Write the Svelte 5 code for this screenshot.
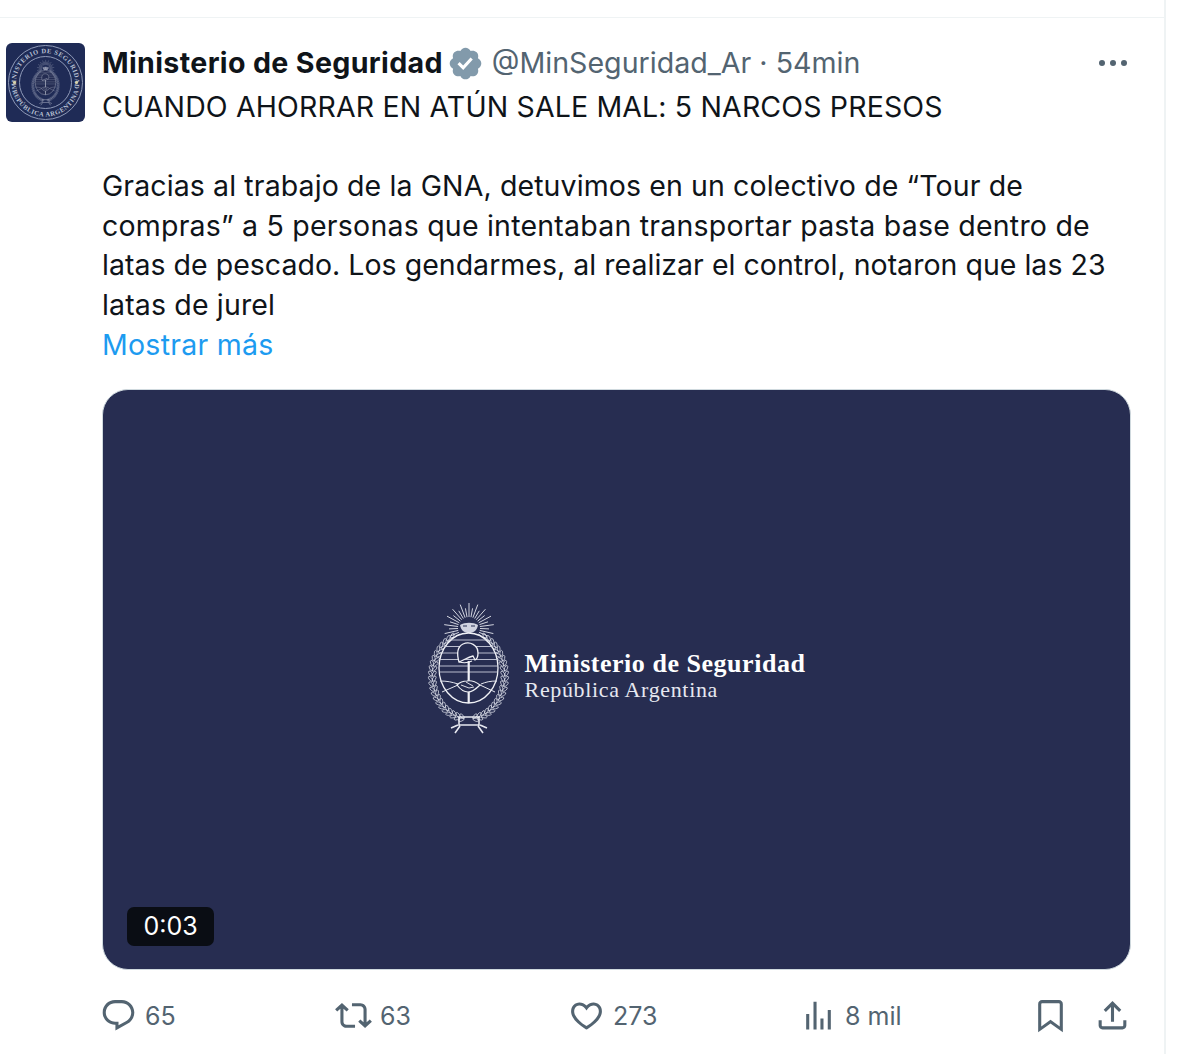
<script>
  const rays = Array.from({ length: 33 }, (_, i) => {
    const a = (Math.PI * (i - 16)) / 17.5;
    const long = i % 2 === 0;
    const r1 = 11;
    const r2 = long ? 25 : 20;
    return {
      x1: 49 + r1 * Math.sin(a),
      y1: 33 - r1 * Math.cos(a),
      x2: 49 + r2 * Math.sin(a),
      y2: 33 - r2 * Math.cos(a)
    };
  });

  const leaves = [];
  for (let side = -1; side <= 1; side += 2) {
    for (let i = 0; i < 22; i++) {
      const t = 0.14 * Math.PI + (i / 21) * 0.8 * Math.PI;
      const deg = side * ((t * 180) / Math.PI + 90);
      [34.5, 38].forEach((r, row) => {
        const cx = 48.5 + side * r * Math.sin(t);
        const cy = 81 - (r + 6.5) * Math.cos(t);
        leaves.push({ cx, cy, deg: deg + side * (row ? 35 : -35) });
      });
    }
  }
  const half = (y) => 29.5 * Math.sqrt(1 - ((y - 73) / 35) ** 2);
  const stripes = [45, 51.5, 58, 64.5, 71, 77].map((y) => ({ y, h: half(y) }));
</script>

<div class="page">
  <div class="topbar"></div>
  <article class="tweet">
    <div class="avatar">
      <svg viewBox="0 0 79 79" width="79" height="79" aria-hidden="true">
        <rect width="79" height="79" rx="6" fill="#1f2b56" />
        <circle cx="39.5" cy="39.5" r="37" fill="none" stroke="#8f9ab8" stroke-width="1" />
        <circle cx="39.5" cy="39.5" r="26" fill="none" stroke="#8f9ab8" stroke-width="1" />
        <defs>
          <path id="arcTop" d="M 39.5 69 A 29.5 29.5 0 1 1 39.5 10 A 29.5 29.5 0 1 1 39.5 69" />
          <path id="arcBottom" d="M 39.5 5.5 A 34 34 0 0 0 39.5 73.5 A 34 34 0 0 0 39.5 5.5" />
        </defs>
        <text class="seal"><textPath href="#arcTop" startOffset="50%" text-anchor="middle">MINISTERIO DE SEGURIDAD</textPath></text>
        <text class="seal"><textPath href="#arcBottom" startOffset="50%" text-anchor="middle">REPÚBLICA ARGENTINA</textPath></text>
        <circle cx="8.5" cy="39.5" r="1.6" fill="#d9d3a8" />
        <circle cx="70.5" cy="39.5" r="1.6" fill="#d9d3a8" />
        <use href="#crest" transform="translate(22.5 14) scale(0.35)" opacity="0.65" />
      </svg>
    </div>
    <div class="body">
      <header class="head">
        <strong class="name">Ministerio de Seguridad</strong>
        <svg class="badge" viewBox="0 0 24 24" aria-hidden="true"><path fill="#829aab" d="M22.25 12c0-1.43-.88-2.67-2.19-3.34.46-1.39.2-2.9-.81-3.91s-2.52-1.27-3.91-.81c-.66-1.31-1.91-2.19-3.34-2.19s-2.67.88-3.33 2.19c-1.4-.46-2.91-.2-3.92.81s-1.26 2.52-.8 3.91c-1.31.67-2.2 1.91-2.2 3.34s.89 2.67 2.2 3.34c-.46 1.39-.21 2.9.8 3.91s2.52 1.26 3.91.81c.67 1.31 1.91 2.19 3.34 2.19s2.68-.88 3.34-2.19c1.39.45 2.9.2 3.91-.81s1.27-2.52.81-3.91c1.31-.67 2.19-1.91 2.19-3.34zm-11.71 4.2L6.8 12.46l1.41-1.42 2.26 2.26 4.8-5.23 1.47 1.36-6.2 6.77z" /></svg>
        <span class="handle">@MinSeguridad_Ar · 54min</span>
        <svg class="more" viewBox="0 0 32 8" aria-hidden="true"><circle cx="5" cy="4" r="3" /><circle cx="16" cy="4" r="3" /><circle cx="27" cy="4" r="3" /></svg>
      </header>
      <div class="text">
        <p class="l-caps">CUANDO AHORRAR EN ATÚN SALE MAL: 5 NARCOS PRESOS</p>
        <p class="l-a">Gracias al trabajo de la GNA, detuvimos en un colectivo de “Tour de</p>
        <p class="l-b">compras” a 5 personas que intentaban transportar pasta base dentro de</p>
        <p>latas de pescado. Los gendarmes, al realizar el control, notaron que las 23</p>
        <p class="l-c">latas de jurel</p>
        <p class="link">Mostrar más</p>
      </div>

      <div class="media">
        <div class="logo">
          <svg class="crest" viewBox="0 0 100 145" width="100" height="145" aria-hidden="true">
            <g id="crest">
              <g stroke="#e6e8f0" stroke-width="1" fill="none" opacity="0.9">
                {#each rays as r}
                  <line x1={r.x1} y1={r.y1} x2={r.x2} y2={r.y2} />
                {/each}
              </g>
              <path d="M40 30c5-3 13-3 18 0-1 6-5 8-9 8s-8-2-9-8z" fill="#cfd2e0" />
              <path d="M43 31h4M51 31h4" stroke="#272d51" stroke-width="1.2" />
              <g fill="none" stroke="#dfe2ec" stroke-width="0.7">
                {#each leaves as l}
                  <ellipse cx={l.cx} cy={l.cy} rx="1.4" ry="3" transform="rotate({l.deg} {l.cx} {l.cy})" />
                {/each}
              </g>
              <ellipse cx="48.5" cy="73" rx="29.5" ry="35" fill="#272d51" stroke="#f0f1f6" stroke-width="1.3" />
              <g stroke="#c9cddd" stroke-width="0.9">
                {#each stripes as s}
                  <line x1={48.5 - s.h} y1={s.y} x2={48.5 + s.h} y2={s.y} />
                {/each}
              </g>
              <path d="M39 67c-2-7-2-15 4-18 7-3 15 1 15 9 0 3-1 6-3 7l-2-4c-5 1-9 4-14 6z" fill="#272d51" stroke="#f0f1f6" stroke-width="1.3" />
              <path d="M39 67c4 1 9 1 13-1" fill="none" stroke="#f0f1f6" stroke-width="1.1" />
              <rect x="47.6" y="66" width="2.2" height="42" fill="#f0f1f6" />
              <path d="M20 86c7 0 12 1 18 3M22 97l16-7M77 86c-7 0-11 1-16 3M75 97l-15-7" fill="none" stroke="#e6e8f0" stroke-width="1" />
              <path d="M37 90c3-3 7-4 10-4 5-1 9 1 13 4-4 4-8 7-12 7-4 0-8-3-11-7z" fill="#272d51" stroke="#f0f1f6" stroke-width="1.2" />
              <path d="M41 90l8 3 5-1M46 87l7 4" fill="none" stroke="#f0f1f6" stroke-width="0.9" />
              <path d="M39 122h20v8H39zM40 131l-5 7M58 131l5 7M38 130l-7 3M60 130l7 3" fill="none" stroke="#e6e8f0" stroke-width="1.6" />
            </g>
          </svg>
          <div class="wordmark">
            <div class="wm1">Ministerio de Seguridad</div>
            <div class="wm2">República Argentina</div>
          </div>
        </div>
        <span class="duration">0:03</span>
      </div>

      <footer class="actions">
        <div class="act">
          <svg viewBox="0 0 24 24" aria-hidden="true"><path d="M1.751 10c0-4.42 3.584-8 8.005-8h4.366c4.49 0 8.129 3.64 8.129 8.13 0 2.96-1.607 5.68-4.196 7.11l-8.054 4.46v-3.69h-.067c-4.49.1-8.183-3.51-8.183-8.01zm8.005-6c-3.317 0-6.005 2.69-6.005 6 0 3.37 2.77 6.08 6.138 6.01l.351-.01h1.761v2.3l5.087-2.81c1.951-1.08 3.163-3.13 3.163-5.36 0-3.39-2.744-6.13-6.129-6.13H9.756z" /></svg>
          <span>65</span>
        </div>
        <div class="act">
          <svg viewBox="0 0 24 24" aria-hidden="true"><path d="M4.5 3.88l4.432 4.14-1.364 1.46L5.5 7.55V16c0 1.1.896 2 2 2H13v2H7.5c-2.209 0-4-1.79-4-4V7.55L1.432 9.48.068 8.02 4.5 3.88zM16.5 6H11V4h5.5c2.209 0 4 1.79 4 4v8.45l2.068-1.93 1.364 1.46-4.432 4.14-4.432-4.14 1.364-1.46 2.068 1.93V8c0-1.1-.896-2-2-2z" /></svg>
          <span>63</span>
        </div>
        <div class="act">
          <svg viewBox="0 0 24 24" aria-hidden="true"><path d="M16.697 5.5c-1.222-.06-2.679.51-3.89 2.16l-.805 1.09-.806-1.09C9.984 6.01 8.526 5.44 7.304 5.5c-1.243.07-2.349.78-2.91 1.91-.552 1.12-.633 2.78.479 4.82 1.074 1.97 3.257 4.27 7.129 6.61 3.87-2.34 6.052-4.64 7.126-6.61 1.111-2.04 1.03-3.7.477-4.82-.561-1.13-1.666-1.84-2.908-1.91zm4.187 7.69c-1.351 2.48-4.001 5.12-8.379 7.67l-.503.3-.504-.3c-4.379-2.55-7.029-5.19-8.382-7.67-1.36-2.5-1.41-4.86-.514-6.67.887-1.79 2.647-2.91 4.601-3.01 1.651-.09 3.368.56 4.798 2.01 1.429-1.45 3.146-2.1 4.796-2.01 1.954.1 3.714 1.22 4.601 3.01.896 1.81.846 4.17-.514 6.67z" /></svg>
          <span>273</span>
        </div>
        <div class="act">
          <svg viewBox="0 0 24 24" aria-hidden="true"><path d="M8.75 21V3h2v18h-2zM18 21V8.5h2V21h-2zM4 21l.004-10h2L6 21H4zm9.248 0v-7h2v7h-2z" /></svg>
          <span>8 mil</span>
        </div>
        <div class="end">
          <svg viewBox="0 0 24 24" aria-hidden="true"><path d="M4 4.5C4 3.12 5.119 2 6.5 2h11C18.881 2 20 3.12 20 4.5v18.44l-8-5.71-8 5.71V4.5zM6.5 4c-.276 0-.5.22-.5.5v14.56l6-4.29 6 4.29V4.5c0-.28-.224-.5-.5-.5h-11z" /></svg>
          <svg viewBox="0 0 24 24" aria-hidden="true"><path d="M12 2.59l5.7 5.7-1.41 1.42L13 6.41V16h-2V6.41l-3.3 3.3-1.41-1.42L12 2.59zM21 15l-.02 3.51c0 1.38-1.12 2.49-2.5 2.49H5.5C4.11 21 3 19.88 3 18.5V15h2v3.5c0 .28.22.5.5.5h12.98c.28 0 .5-.22.5-.5L19 15h2z" /></svg>
        </div>
      </footer>
    </div>
  </article>
</div>

<style>
  :global(body) {
    margin: 0;
    background: #fff;
  }
  .page {
    width: 1164px;
    height: 1054px;
    border-right: 2px solid #eff3f4;
    font-family: "Inter", "Noto Sans", sans-serif;
    color: #0f1419;
    overflow: hidden;
  }
  .topbar {
    height: 17px;
    border-bottom: 1px solid #eff3f4;
  }
  .tweet {
    display: flex;
    gap: 17px;
    padding: 25px 33px 0 6px;
  }
  .avatar {
    flex: none;
    width: 79px;
    height: 79px;
  }
  .avatar svg {
    display: block;
  }
  .seal {
    font-family: "Liberation Serif", serif;
    font-size: 6.6px;
    font-weight: 700;
    letter-spacing: 0.55px;
    fill: #b8c0d4;
  }
  .body {
    flex: 1;
    min-width: 0;
  }
  .head {
    display: flex;
    align-items: center;
    height: 40px;
    font-size: 28.6px;
    line-height: 40px;
  }
  .name {
    font-weight: 700;
    letter-spacing: 0.35px;
  }
  .badge {
    width: 37px;
    height: 37px;
    margin-left: 4px;
    margin-right: 8px;
    flex: none;
  }
  .handle {
    color: #536471;
  }
  .more {
    width: 32px;
    height: 8px;
    margin-left: auto;
    margin-right: 2px;
    fill: #536471;
  }
  .text {
    margin: 4px 0 0;
    font-size: 28.5px;
    line-height: 39.6px;
    letter-spacing: 0.02px;
    white-space: nowrap;
  }
  .text p {
    margin: 0;
  }
  .text .l-caps {
    margin-bottom: 39.6px;
    letter-spacing: 0.14px;
  }
  .l-a {
    letter-spacing: 0.11px;
  }
  .l-b {
    letter-spacing: 0.22px;
  }
  .l-c {
    letter-spacing: 0.15px;
  }
  .link {
    color: #1d9bf0;
    letter-spacing: 0.25px;
  }
  .media {
    position: relative;
    box-sizing: border-box;
    height: 581px;
    margin-top: 25px;
    border: 1px solid #cfd9de;
    border-radius: 26px;
    background: #272d51;
    display: flex;
    align-items: center;
    justify-content: center;
    padding: 0 8px 25px 0;
  }
  .logo {
    display: flex;
    align-items: center;
    gap: 5px;
  }
  .crest {
    display: block;
    flex: none;
  }
  .wordmark {
    color: #fff;
    font-family: "Liberation Serif", serif;
    white-space: nowrap;
    padding-top: 15px;
  }
  .wm1 {
    font-size: 26px;
    font-weight: 700;
    line-height: 30px;
    letter-spacing: 0.53px;
  }
  .wm2 {
    font-size: 22px;
    line-height: 22px;
    color: #e6e8f0;
    letter-spacing: 0.65px;
  }
  .duration {
    position: absolute;
    left: 24px;
    bottom: 23px;
    width: 87px;
    height: 39px;
    border-radius: 7px;
    background: #0a0d14;
    color: #fff;
    font-size: 25px;
    line-height: 39px;
    text-align: center;
  }
  .actions {
    display: grid;
    grid-template-columns: 235px 233px 232px 1fr auto;
    align-items: center;
    height: 37px;
    margin-top: 27px;
    margin-left: -2px;
  }
  .act {
    display: flex;
    align-items: center;
    gap: 8px;
    color: #536471;
    font-size: 25px;
  }
  .actions svg {
    display: block;
    width: 37px;
    height: 37px;
    fill: #536471;
    flex: none;
  }
  .end {
    display: flex;
    gap: 25px;
  }
</style>
